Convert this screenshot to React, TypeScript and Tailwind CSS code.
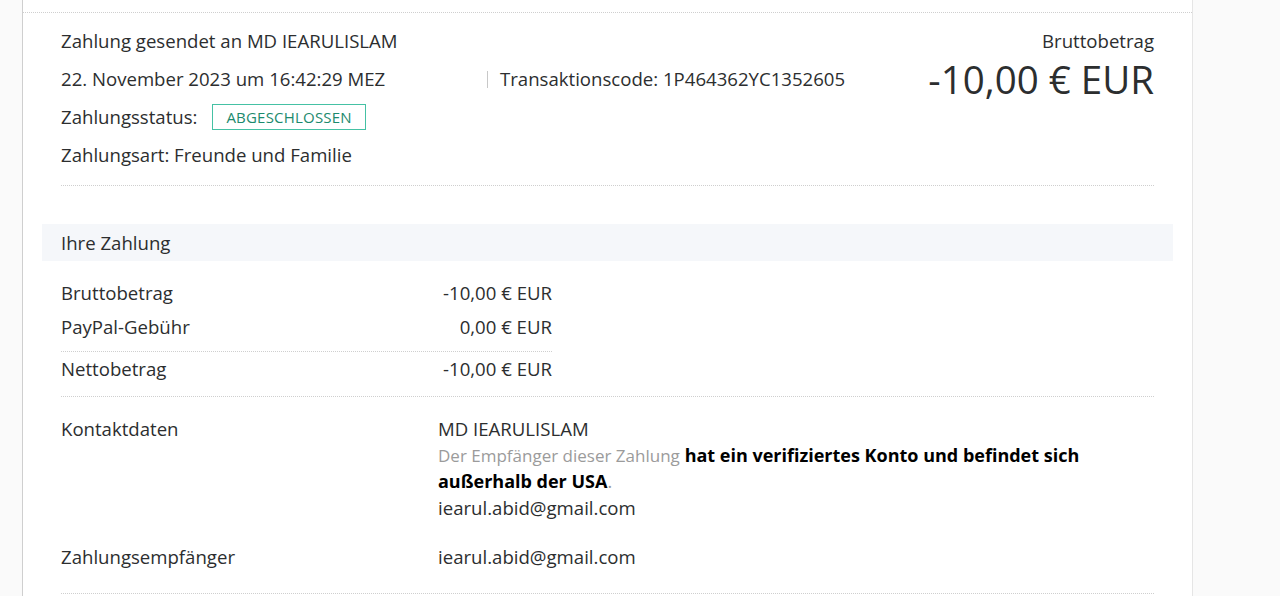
const font = { fontFamily: '"Open Sans", "Liberation Sans", sans-serif' };

const feeRows = [
  { label: "Bruttobetrag", value: "-10,00 € EUR" },
  { label: "PayPal-Gebühr", value: "0,00 € EUR" },
];

export default function App() {
  return (
    <div className="flex min-h-[596px] bg-[#fafafa] text-[#2c2e2f] text-[18.6px]" style={font}>
      <div className="ml-[22px] w-[1171px] bg-white border-l border-dotted border-l-[#cfcfcf] border-r border-r-[#e5e5e5] border-solid">
        <div className="mt-[12px] border-t border-dotted border-[#cfcfcf] px-[38px] pr-[38px]">
          {/* header */}
          <div className="flex pt-[9px]">
            <div className="flex-1">
              <div className="h-[38px] flex items-center">Zahlung gesendet an MD IEARULISLAM</div>
              <div className="h-[38px] flex items-center">
                <span className="w-[426px]">22. November 2023 um 16:42:29 MEZ</span>
                <span className="h-[17px] border-l border-[#c8c8c8] mr-[12px]" />
                <span>Transaktionscode: 1P464362YC1352605</span>
              </div>
              <div className="h-[38px] flex items-center">
                <span>Zahlungsstatus:</span>
                <span className="ml-[15px] h-[26px] px-[13px] flex items-center border-[1.5px] border-[#45c1a4] text-[#1c8a6d] text-[15px] tracking-[0.2px]">
                  ABGESCHLOSSEN
                </span>
              </div>
              <div className="h-[38px] flex items-center">Zahlungsart: Freunde und Familie</div>
            </div>
            <div className="text-right">
              <div className="h-[38px] flex items-center justify-end">Bruttobetrag</div>
              <div className="text-[38.5px] leading-[40px] -mt-[1px]">-10,00 € EUR</div>
            </div>
          </div>
          <div className="mt-[11px] border-t border-dotted border-[#cfcfcf]" />

          {/* Ihre Zahlung */}
          <div className="mt-[38px] -mx-[19px] px-[19px] h-[37px] flex items-center bg-[#f5f7fa]">Ihre Zahlung</div>

          <div className="w-[491px] mt-[15px]">
            {feeRows.map((r) => (
              <div key={r.label} className="h-[34px] flex items-center justify-between">
                <span>{r.label}</span>
                <span>{r.value}</span>
              </div>
            ))}
            <div className="mt-[7px] border-t border-dotted border-[#cfcfcf]" />
            <div className="h-[34px] flex items-center justify-between">
              <span>Nettobetrag</span>
              <span>-10,00 € EUR</span>
            </div>
          </div>
          <div className="mt-[10px] border-t border-dotted border-[#cfcfcf]" />

          {/* Kontakt */}
          <div className="flex pt-[19px] leading-[25.7px]">
            <div className="w-[377px] shrink-0">Kontaktdaten</div>
            <div className="w-[670px]">
              <div>MD IEARULISLAM</div>
              <div>
                <span className="text-[#9b9b9b] text-[17px]">Der Empfänger dieser Zahlung</span>{" "}
                <span className="font-bold text-black text-[18px]">hat ein verifiziertes Konto und befindet sich</span>{" "}
                <span className="font-bold text-black text-[18px]">außerhalb der USA</span>
                <span className="text-[#9b9b9b] text-[18px]">.</span>
              </div>
              <div>iearul.abid@gmail.com</div>
            </div>
          </div>
          <div className="flex mt-[23px] leading-[26px]">
            <div className="w-[377px] shrink-0">Zahlungsempfänger</div>
            <div>iearul.abid@gmail.com</div>
          </div>
          <div className="mt-[23px] border-t border-dotted border-[#cfcfcf]" />
        </div>
      </div>
    </div>
  );
}
